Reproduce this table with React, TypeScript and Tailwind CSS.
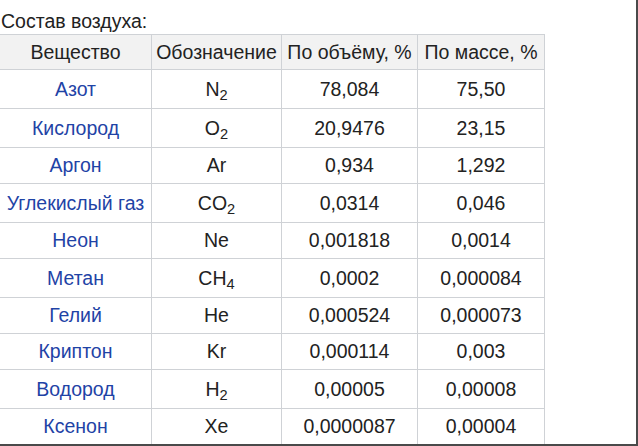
import React from "react";

// Состав воздуха: вещество, обозначение, доли по объёму и массе
interface Gas {
  name: string;
  symbol: string;
  sub?: string;
  volume: string;
  mass: string;
}

const газы: Gas[] = [
  { name: "Азот", symbol: "N", sub: "2", volume: "78,084", mass: "75,50" },
  { name: "Кислород", symbol: "O", sub: "2", volume: "20,9476", mass: "23,15" },
  { name: "Аргон", symbol: "Ar", volume: "0,934", mass: "1,292" },
  { name: "Углекислый газ", symbol: "CO", sub: "2", volume: "0,0314", mass: "0,046" },
  { name: "Неон", symbol: "Ne", volume: "0,001818", mass: "0,0014" },
  { name: "Метан", symbol: "CH", sub: "4", volume: "0,0002", mass: "0,000084" },
  { name: "Гелий", symbol: "He", volume: "0,000524", mass: "0,000073" },
  { name: "Криптон", symbol: "Kr", volume: "0,000114", mass: "0,003" },
  { name: "Водород", symbol: "H", sub: "2", volume: "0,00005", mass: "0,00008" },
  { name: "Ксенон", symbol: "Xe", volume: "0,0000087", mass: "0,00004" },
];

const cell = "border border-[#cfd2d6] px-[2px] text-center whitespace-nowrap";

export default function App() {
  return (
    <div
      className="w-[638px] h-[446px] overflow-hidden bg-white border-r-2 border-b-2 border-[#4a4a4a] text-[19.5px] leading-[23px] text-[#222]"
      style={{ fontFamily: '"Liberation Sans", Arial, sans-serif' }}
    >
      <div className="pl-[1px] pt-[10px] h-[34px]">Состав воздуха:</div>
      <table className="table-fixed border-collapse ml-[-1px] w-[545px]">
        <colgroup>
          <col className="w-[152px]" />
          <col className="w-[130px]" />
          <col className="w-[136px]" />
          <col className="w-[127px]" />
        </colgroup>
        <thead>
          <tr className="bg-[#f2f2f2]">
            <th className={`${cell} py-[5.5px] font-normal`}>Вещество</th>
            <th className={`${cell} py-[5.5px] font-normal`}>Обозначение</th>
            <th className={`${cell} py-[5.5px] font-normal`}>По объёму, %</th>
            <th className={`${cell} py-[5.5px] font-normal`}>По массе, %</th>
          </tr>
        </thead>
        <tbody>
          {газы.map((g) => {
            // строки с индексом чуть выше
            const pad = g.sub ? "pt-[8px] pb-[7px]" : "py-[6px]";
            return (
              <tr key={g.name}>
                <td className={`${cell} ${pad} text-[#1f43a6]`}>{g.name}</td>
                <td className={`${cell} ${pad}`}>
                  {g.symbol}
                  {g.sub && <sub>{g.sub}</sub>}
                </td>
                <td className={`${cell} ${pad}`}>{g.volume}</td>
                <td className={`${cell} ${pad}`}>{g.mass}</td>
              </tr>
            );
          })}
        </tbody>
      </table>
    </div>
  );
}
